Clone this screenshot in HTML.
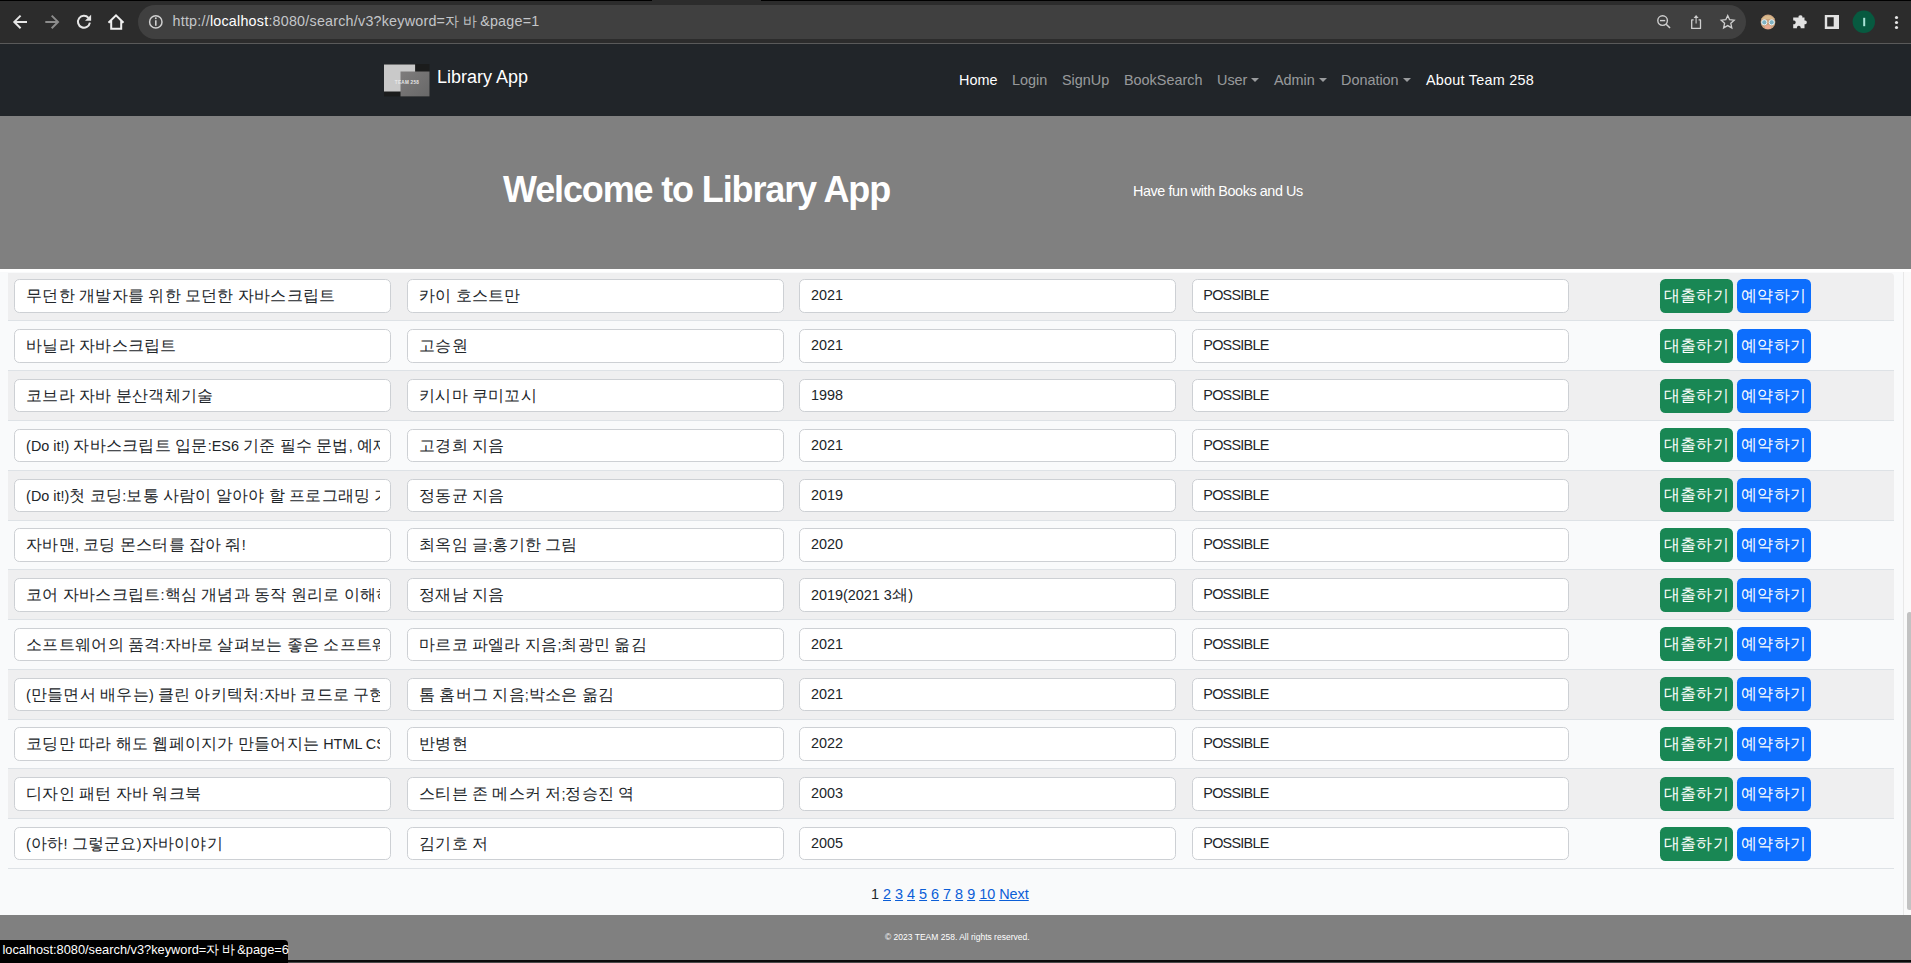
<!DOCTYPE html>
<html><head><meta charset="utf-8">
<style>
*{box-sizing:border-box;margin:0;padding:0}
html,body{width:1911px;height:963px;overflow:hidden;background:#f9fafb;font-family:"Liberation Sans",sans-serif;position:relative}
#topline{position:absolute;left:0;top:0;width:1911px;height:1px;background:#000}
#toolbar{position:absolute;left:0;top:1px;width:1911px;height:42px;background:#2c2c2c}
#tbline{position:absolute;left:0;top:43px;width:1911px;height:1px;background:#5a5a5a}
#omni{position:absolute;left:138px;top:5px;width:1608px;height:34px;border-radius:17px;background:#404040}
#url{position:absolute;left:172.5px;top:13px;font-size:14.3px;letter-spacing:0.23px;color:#c4c6c9;white-space:nowrap;line-height:17px}
#url b{font-weight:normal;color:#fff}
#nav{position:absolute;left:0;top:44px;width:1911px;height:72px;background:#212529}
#brand{position:absolute;left:437px;top:65px;font-size:18px;color:#fff;line-height:24px;white-space:nowrap}
.nl{position:absolute;top:71px;font-size:14.4px;line-height:18px;color:rgba(255,255,255,.55);white-space:nowrap}
.nl.act{color:#fff}
.caret{display:inline-block;width:0;height:0;border-left:4px solid transparent;border-right:4px solid transparent;border-top:4.5px solid currentColor;vertical-align:3px;margin-left:4px}
#hdr{position:absolute;left:0;top:116px;width:1911px;height:152.6px;background:#808080}
#h1{position:absolute;left:503px;top:168px;font-size:36px;letter-spacing:-1.14px;font-weight:bold;color:#fff;white-space:nowrap;line-height:44px}
#sub{position:absolute;left:1133px;top:182px;font-size:14.4px;letter-spacing:-0.42px;color:#fff;white-space:nowrap;line-height:18px}
#white{position:absolute;left:0;top:268.6px;width:1911px;height:3.8px;background:#fff}
.row{position:absolute;left:7.5px;width:1886px;height:49.7px;border-bottom:1px solid #dee2e6}
.row.s{background:#efeff0}
.row.first{border-top-right-radius:4px}
.inp{position:absolute;top:7.2px;width:377.2px;height:33.5px;background:#fff;border:1px solid #cdd0d4;border-radius:5.4px;padding:0 10.8px;overflow:hidden}
.inp.ps > span{letter-spacing:-0.75px}
.k{letter-spacing:0.3px;font-size:16.2px}
.btn .k{letter-spacing:0.35px}
#url .k{letter-spacing:3.5px;font-size:14.3px}
#tip .k{letter-spacing:2.5px;font-size:12.8px}
.inp > span{display:block;overflow:hidden;white-space:nowrap;font-size:14.4px;line-height:31.5px;color:#212529}
.btn{position:absolute;top:7.2px;height:34px;border-radius:5.4px;color:#fff;font-size:14.4px;line-height:32px;text-align:center;white-space:nowrap}
.btn.g{left:1652.5px;width:73px;background:#198754}
.btn.b{left:1729.2px;width:74.3px;background:#0d6efd}
#pag{position:absolute;left:871px;top:885px;font-size:14.4px;line-height:18px;color:#212529;white-space:nowrap}
#pag a{color:#0b5ed7;text-decoration:underline}
#sbtrack{position:absolute;left:1903px;top:272.4px;width:8px;height:643px;background:#fafafa;border-left:1px solid #e8e8e8}
#sbthumb{position:absolute;left:1906.5px;top:612px;width:5px;height:298px;border-radius:3px;background:#c2c2c2}
#foot{position:absolute;left:0;top:915px;width:1911px;height:44.6px;background:#808080}
#foottxt{position:absolute;left:885px;top:932px;font-size:8.5px;color:#fff;white-space:nowrap;line-height:11px}
#bottom{position:absolute;left:0;top:959px;width:1911px;height:4px;background:linear-gradient(#0c0c0c 0,#0c0c0c 3.4px,#4a4a4a 3.4px)}
#tip{position:absolute;left:0;top:940px;width:288px;height:23px;background:#000;border-top-right-radius:4px;color:#fff;font-size:12.8px;line-height:19px;padding-left:2.5px;white-space:nowrap}
</style></head><body>
<div id="topline"></div>
<div id="toolbar"></div>
<div style="position:absolute;left:652px;top:0;width:109px;height:1px;background:#2c2c2c"></div>
<div id="tbline"></div>
<div id="omni"></div>
<svg id="ic" width="1911" height="44" viewBox="0 0 1911 44" style="position:absolute;left:0;top:0">
<g fill="none" stroke-linecap="butt" stroke-linejoin="miter">
 <path d="M27 21.9H14.5M20.6 15.6L14.3 21.9L20.6 28.2" stroke="#e6e6e6" stroke-width="2"/>
 <path d="M45.3 21.9H57.5M51.7 15.6L58 21.9L51.7 28.2" stroke="#8c8c8c" stroke-width="2"/>
 <path d="M89.9 22.7A6 6 0 1 1 88.5 17.8" stroke="#e6e6e6" stroke-width="2"/>
 <path d="M85 20.8L91.1 14.8L91.1 20.8Z" fill="#e6e6e6" stroke="none"/>
 <path d="M108.5 22.8L116 15.3L123.5 22.8M111.2 20.5V28.8H121.2V20.5" stroke="#f0f0f0" stroke-width="2"/>
 <circle cx="155.8" cy="21.9" r="6.2" stroke="#d0d0d0" stroke-width="1.5"/>
 <path d="M155.8 20.3V25.8" stroke="#d0d0d0" stroke-width="1.6"/>
 <circle cx="155.8" cy="18.3" r="0.95" fill="#d0d0d0" stroke="none"/>
 <circle cx="1662.6" cy="20.6" r="4.8" stroke="#cfcfcf" stroke-width="1.4"/>
 <path d="M1660 20.6H1665.2" stroke="#cfcfcf" stroke-width="1.4"/>
 <path d="M1666.2 24.2L1670 28" stroke="#cfcfcf" stroke-width="1.6"/>
 <path d="M1693.6 19.9H1691.7V28.4H1700.5V19.9H1698.6" stroke="#cfcfcf" stroke-width="1.3" stroke-linejoin="round"/>
 <path d="M1696.1 23.6V17.2" stroke="#b8b8b8" stroke-width="1.3"/>
 <path d="M1693.6 18L1696.1 14.9L1698.6 18Z" fill="#cfcfcf" stroke="none"/>
 <path d="M1727.7 15.6L1729.6 19.7L1734.2 20.2L1730.8 23.3L1731.8 27.9L1727.7 25.6L1723.6 27.9L1724.6 23.3L1721.2 20.2L1725.8 19.7Z" stroke="#cfcfcf" stroke-width="1.3"/>
</g>
<circle cx="1768" cy="22" r="7.4" fill="#caa27f"/>
<path d="M1761 19 Q1768 12 1775 19 Z" fill="#d9b98c"/>
<ellipse cx="1768" cy="27" rx="3.2" ry="2" fill="#e8a890"/>
<circle cx="1764.3" cy="22.3" r="2.6" fill="#7fb3c4" stroke="#e8f2f5" stroke-width="1"/>
<circle cx="1771.7" cy="22.3" r="2.6" fill="#7fb3c4" stroke="#e8f2f5" stroke-width="1"/>
<path d="M1796.5 17.5H1798.6A1.9 1.9 0 1 1 1802.3 17.5H1804.5V20.5A1.9 1.9 0 1 1 1804.5 24.2V28.3H1800.6A1.9 1.9 0 1 0 1797 28.3H1793.2V24.2A1.9 1.9 0 1 0 1793.2 20.6V17.5Z" fill="#e2e2e2"/>
<path d="M1824.8 15H1839V28.9H1824.8Z M1827.2 17.2V26.6H1833.7V17.2Z" fill="#e2e2e2" fill-rule="evenodd"/>
<circle cx="1863.8" cy="21.8" r="11.2" fill="#075a40"/>
<rect x="1863.2" y="17.8" width="2" height="8.4" fill="#a9e3d6"/>
<circle cx="1896.5" cy="17.5" r="1.6" fill="#e6e6e6"/>
<circle cx="1896.5" cy="22.5" r="1.6" fill="#e6e6e6"/>
<circle cx="1896.5" cy="27.5" r="1.6" fill="#e6e6e6"/>
</svg>
<div id="url">http://<b>localhost</b>:8080/search/v3?keyword=<span class="k">자바</span>&amp;page=1</div>
<div id="nav"></div>
<svg width="46" height="33" viewBox="0 0 46 33" style="position:absolute;left:383.7px;top:63.5px">
<defs><linearGradient id="lg" x1="0" y1="0" x2="1" y2="1"><stop offset="0" stop-color="#7e7c7c"/><stop offset="1" stop-color="#686868"/></linearGradient></defs>
<rect x="0" y="0" width="45.5" height="32.4" fill="#1b1c1c"/>
<rect x="0" y="0.5" width="31.1" height="27" fill="#c9c9c9"/>
<rect x="16.5" y="7.5" width="29" height="24.9" fill="url(#lg)"/>
<text x="23" y="19.5" font-size="4.6" font-family="Liberation Sans" font-weight="bold" fill="#e8e8e8" text-anchor="middle" letter-spacing="0.3">TEAM 258</text>
</svg>
<div id="brand">Library App</div>
<div class="nl act" style="left:959px">Home</div>
<div class="nl" style="left:1012px">Login</div>
<div class="nl" style="left:1062px">SignUp</div>
<div class="nl" style="left:1124px">BookSearch</div>
<div class="nl" style="left:1217px">User<span class="caret"></span></div>
<div class="nl" style="left:1274px">Admin<span class="caret"></span></div>
<div class="nl" style="left:1341px">Donation<span class="caret"></span></div>
<div class="nl act" style="left:1426px;letter-spacing:0.25px">About Team 258</div>
<div id="hdr"></div>
<div id="h1">Welcome to Library App</div>
<div id="sub">Have fun with Books and Us</div>
<div id="white"></div>
<div class="row s first" style="top:273px;height:48px"><div class="inp" style="left:6.8px;top:6.40px"><span><span class="k">무던한</span> <span class="k">개발자를</span> <span class="k">위한</span> <span class="k">모던한</span> <span class="k">자바스크립트</span></span></div><div class="inp" style="left:399.7px;top:6.40px"><span><span class="k">카이</span> <span class="k">호스트만</span></span></div><div class="inp" style="left:791.7px;top:6.40px"><span>2021</span></div><div class="inp ps" style="left:1184.0px;top:6.40px"><span>POSSIBLE</span></div><div class="btn g" style="top:6.00px"><span class="k">대출하기</span></div><div class="btn b" style="top:6.00px"><span class="k">예약하기</span></div></div>
<div class="row" style="top:321px;height:50px"><div class="inp" style="left:6.8px;top:8.18px"><span><span class="k">바닐라</span> <span class="k">자바스크립트</span></span></div><div class="inp" style="left:399.7px;top:8.18px"><span><span class="k">고승원</span></span></div><div class="inp" style="left:791.7px;top:8.18px"><span>2021</span></div><div class="inp ps" style="left:1184.0px;top:8.18px"><span>POSSIBLE</span></div><div class="btn g" style="top:7.78px"><span class="k">대출하기</span></div><div class="btn b" style="top:7.78px"><span class="k">예약하기</span></div></div>
<div class="row s" style="top:371px;height:50px"><div class="inp" style="left:6.8px;top:7.96px"><span><span class="k">코브라</span> <span class="k">자바</span> <span class="k">분산객체기술</span></span></div><div class="inp" style="left:399.7px;top:7.96px"><span><span class="k">키시마</span> <span class="k">쿠미꼬시</span></span></div><div class="inp" style="left:791.7px;top:7.96px"><span>1998</span></div><div class="inp ps" style="left:1184.0px;top:7.96px"><span>POSSIBLE</span></div><div class="btn g" style="top:7.56px"><span class="k">대출하기</span></div><div class="btn b" style="top:7.56px"><span class="k">예약하기</span></div></div>
<div class="row" style="top:421px;height:50px"><div class="inp" style="left:6.8px;top:7.74px"><span>(Do it!) <span class="k">자바스크립트</span> <span class="k">입문</span>:ES6 <span class="k">기준</span> <span class="k">필수</span> <span class="k">문법</span>, <span class="k">예제</span> <span class="k">만들며</span> <span class="k">스</span></span></div><div class="inp" style="left:399.7px;top:7.74px"><span><span class="k">고경희</span> <span class="k">지음</span></span></div><div class="inp" style="left:791.7px;top:7.74px"><span>2021</span></div><div class="inp ps" style="left:1184.0px;top:7.74px"><span>POSSIBLE</span></div><div class="btn g" style="top:7.34px"><span class="k">대출하기</span></div><div class="btn b" style="top:7.34px"><span class="k">예약하기</span></div></div>
<div class="row s" style="top:471px;height:50px"><div class="inp" style="left:6.8px;top:7.52px"><span>(Do it!)<span class="k">첫</span> <span class="k">코딩</span>:<span class="k">보통</span> <span class="k">사람이</span> <span class="k">알아야</span> <span class="k">할</span> <span class="k">프로그래밍</span> <span class="k">기초</span> With <span class="k">자</span></span></div><div class="inp" style="left:399.7px;top:7.52px"><span><span class="k">정동균</span> <span class="k">지음</span></span></div><div class="inp" style="left:791.7px;top:7.52px"><span>2019</span></div><div class="inp ps" style="left:1184.0px;top:7.52px"><span>POSSIBLE</span></div><div class="btn g" style="top:7.12px"><span class="k">대출하기</span></div><div class="btn b" style="top:7.12px"><span class="k">예약하기</span></div></div>
<div class="row" style="top:521px;height:49px"><div class="inp" style="left:6.8px;top:7.30px"><span><span class="k">자바맨</span>, <span class="k">코딩</span> <span class="k">몬스터를</span> <span class="k">잡아</span> <span class="k">줘</span>!</span></div><div class="inp" style="left:399.7px;top:7.30px"><span><span class="k">최옥임</span> <span class="k">글</span>;<span class="k">홍기한</span> <span class="k">그림</span></span></div><div class="inp" style="left:791.7px;top:7.30px"><span>2020</span></div><div class="inp ps" style="left:1184.0px;top:7.30px"><span>POSSIBLE</span></div><div class="btn g" style="top:6.90px"><span class="k">대출하기</span></div><div class="btn b" style="top:6.90px"><span class="k">예약하기</span></div></div>
<div class="row s" style="top:570px;height:50px"><div class="inp" style="left:6.8px;top:8.08px"><span><span class="k">코어</span> <span class="k">자바스크립트</span>:<span class="k">핵심</span> <span class="k">개념과</span> <span class="k">동작</span> <span class="k">원리로</span> <span class="k">이해하는</span> <span class="k">자바스크립트</span></span></div><div class="inp" style="left:399.7px;top:8.08px"><span><span class="k">정재남</span> <span class="k">지음</span></span></div><div class="inp" style="left:791.7px;top:8.08px"><span>2019(2021 3<span class="k">쇄</span>)</span></div><div class="inp ps" style="left:1184.0px;top:8.08px"><span>POSSIBLE</span></div><div class="btn g" style="top:7.68px"><span class="k">대출하기</span></div><div class="btn b" style="top:7.68px"><span class="k">예약하기</span></div></div>
<div class="row" style="top:620px;height:50px"><div class="inp" style="left:6.8px;top:7.86px"><span><span class="k">소프트웨어의</span> <span class="k">품격</span>:<span class="k">자바로</span> <span class="k">살펴보는</span> <span class="k">좋은</span> <span class="k">소프트웨어</span> <span class="k">개발</span></span></div><div class="inp" style="left:399.7px;top:7.86px"><span><span class="k">마르코</span> <span class="k">파엘라</span> <span class="k">지음</span>;<span class="k">최광민</span> <span class="k">옮김</span></span></div><div class="inp" style="left:791.7px;top:7.86px"><span>2021</span></div><div class="inp ps" style="left:1184.0px;top:7.86px"><span>POSSIBLE</span></div><div class="btn g" style="top:7.46px"><span class="k">대출하기</span></div><div class="btn b" style="top:7.46px"><span class="k">예약하기</span></div></div>
<div class="row s" style="top:670px;height:50px"><div class="inp" style="left:6.8px;top:7.64px"><span>(<span class="k">만들면서</span> <span class="k">배우는</span>) <span class="k">클린</span> <span class="k">아키텍처</span>:<span class="k">자바</span> <span class="k">코드로</span> <span class="k">구현하는</span> <span class="k">클린</span> <span class="k">웹</span></span></div><div class="inp" style="left:399.7px;top:7.64px"><span><span class="k">톰</span> <span class="k">홈버그</span> <span class="k">지음</span>;<span class="k">박소은</span> <span class="k">옮김</span></span></div><div class="inp" style="left:791.7px;top:7.64px"><span>2021</span></div><div class="inp ps" style="left:1184.0px;top:7.64px"><span>POSSIBLE</span></div><div class="btn g" style="top:7.24px"><span class="k">대출하기</span></div><div class="btn b" style="top:7.24px"><span class="k">예약하기</span></div></div>
<div class="row" style="top:720px;height:49px"><div class="inp" style="left:6.8px;top:7.42px"><span><span class="k">코딩만</span> <span class="k">따라</span> <span class="k">해도</span> <span class="k">웹페이지가</span> <span class="k">만들어지는</span> HTML CSS <span class="k">자바스크</span></span></div><div class="inp" style="left:399.7px;top:7.42px"><span><span class="k">반병현</span></span></div><div class="inp" style="left:791.7px;top:7.42px"><span>2022</span></div><div class="inp ps" style="left:1184.0px;top:7.42px"><span>POSSIBLE</span></div><div class="btn g" style="top:7.02px"><span class="k">대출하기</span></div><div class="btn b" style="top:7.02px"><span class="k">예약하기</span></div></div>
<div class="row s" style="top:769px;height:50px"><div class="inp" style="left:6.8px;top:8.20px"><span><span class="k">디자인</span> <span class="k">패턴</span> <span class="k">자바</span> <span class="k">워크북</span></span></div><div class="inp" style="left:399.7px;top:8.20px"><span><span class="k">스티븐</span> <span class="k">존</span> <span class="k">메스커</span> <span class="k">저</span>;<span class="k">정승진</span> <span class="k">역</span></span></div><div class="inp" style="left:791.7px;top:8.20px"><span>2003</span></div><div class="inp ps" style="left:1184.0px;top:8.20px"><span>POSSIBLE</span></div><div class="btn g" style="top:7.80px"><span class="k">대출하기</span></div><div class="btn b" style="top:7.80px"><span class="k">예약하기</span></div></div>
<div class="row" style="top:819px;height:50px"><div class="inp" style="left:6.8px;top:7.98px"><span>(<span class="k">아하</span>! <span class="k">그렇군요</span>)<span class="k">자바이야기</span></span></div><div class="inp" style="left:399.7px;top:7.98px"><span><span class="k">김기호</span> <span class="k">저</span></span></div><div class="inp" style="left:791.7px;top:7.98px"><span>2005</span></div><div class="inp ps" style="left:1184.0px;top:7.98px"><span>POSSIBLE</span></div><div class="btn g" style="top:7.58px"><span class="k">대출하기</span></div><div class="btn b" style="top:7.58px"><span class="k">예약하기</span></div></div>
<div id="pag">1 <a>2</a> <a>3</a> <a>4</a> <a>5</a> <a>6</a> <a>7</a> <a>8</a> <a>9</a> <a>10</a> <a>Next</a></div>
<div id="sbtrack"></div>
<div id="sbthumb"></div>
<div id="bottom"></div>
<div id="foot"></div>
<div id="foottxt">© 2023 TEAM 258. All rights reserved.</div>
<div id="tip">localhost:8080/search/v3?keyword=<span class="k">자바</span>&amp;page=6</div>
</body></html>
